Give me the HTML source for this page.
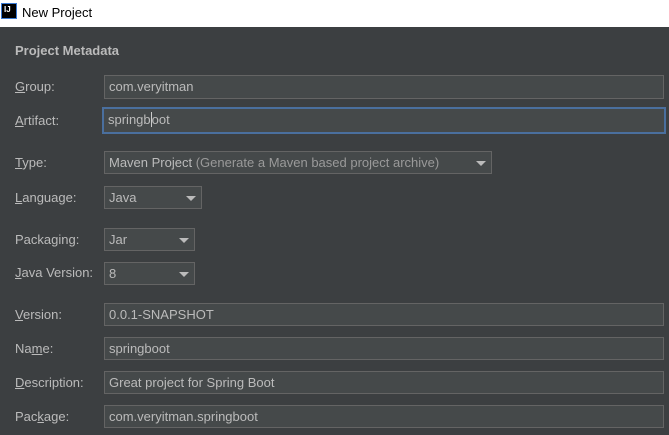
<!DOCTYPE html>
<html><head><meta charset="utf-8"><style>
*{margin:0;padding:0;box-sizing:border-box}
body{width:669px;height:435px;overflow:hidden;background:#3c3f41;font-family:"Liberation Sans","Noto Sans CJK SC",sans-serif;font-size:13px;color:#bbbbbb;position:relative}
.title{position:absolute;left:0;top:0;width:669px;height:27px;background:#fff;color:#000;font-size:13px}
.title .ic{position:absolute;left:1px;top:3px;width:16px;height:16px;background:#000;border:1px solid #3b7bd4;color:#fff;font-size:8px;font-weight:bold;line-height:9px;padding-left:2px;padding-top:1px}
.title .t{position:absolute;left:22px;top:5px}
.l{position:absolute;left:15px}
.f{position:absolute;left:104px;background:#45494a;border:1px solid #646464;padding-left:4px;line-height:21px;white-space:nowrap}
.a{position:absolute;width:0;height:0;border-left:5px solid transparent;border-right:5px solid transparent;border-top:5px solid #bbb;top:9px}
u{text-decoration:underline}
</style></head><body>
<div class="title"><div class="ic">IJ</div><div class="t">New Project</div></div>
<div class="l" style="top:43px;font-weight:bold">Project Metadata</div>
<div class="l" style="top:79px"><u>G</u>roup:</div>
<div class="f" style="top:75px;width:560px;height:24px">com.veryitman</div>
<div class="l" style="top:113px"><u>A</u>rtifact:</div>
<div class="f" style="top:107px;left:102px;width:564px;height:27px;border:2px solid #4a6f9e;padding-left:4px;line-height:22px">springb<span style="border-left:1px solid #ccc"></span>oot</div>
<div class="l" style="top:155px"><u>T</u>ype:</div>
<div class="f" style="top:151px;width:388px;height:23px">Maven Project <span style="color:#9a9a9a">(Generate a Maven based project archive)</span><div class="a" style="left:371px"></div></div>
<div class="l" style="top:190px"><u>L</u>anguage:</div>
<div class="f" style="top:186px;width:98px;height:23px">Java<div class="a" style="left:81px"></div></div>
<div class="l" style="top:232px">Packa<u>g</u>ing:</div>
<div class="f" style="top:228px;width:91px;height:23px">Jar<div class="a" style="left:74px"></div></div>
<div class="l" style="top:265px"><u>J</u>ava Version:</div>
<div class="f" style="top:262px;width:91px;height:23px">8<div class="a" style="left:74px"></div></div>
<div class="l" style="top:307px"><u>V</u>ersion:</div>
<div class="f" style="top:303px;width:560px;height:23px">0.0.1-SNAPSHOT</div>
<div class="l" style="top:341px">Na<u>m</u>e:</div>
<div class="f" style="top:337px;width:560px;height:23px">springboot</div>
<div class="l" style="top:375px"><u>D</u>escription:</div>
<div class="f" style="top:371px;width:560px;height:23px">Great project for Spring Boot</div>
<div class="l" style="top:409px">Pac<u>k</u>age:</div>
<div class="f" style="top:405px;width:560px;height:23px">com.veryitman.springboot</div>
</body></html>
